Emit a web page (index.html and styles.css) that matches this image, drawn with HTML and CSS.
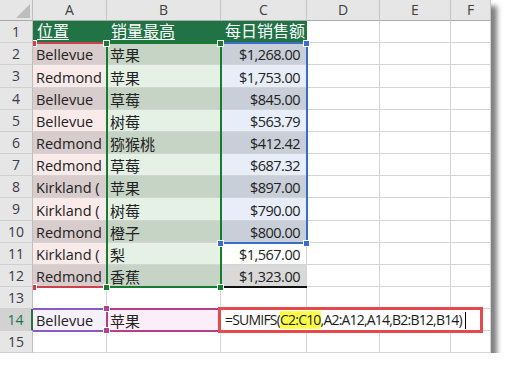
FILE: index.html
```html
<!DOCTYPE html>
<html lang="zh">
<head>
<meta charset="utf-8">
<title>SUMIFS</title>
<link rel="stylesheet" href="styles.css">
</head>
<body>
<div class="sheet">
  <div class="c corner"><svg width="32" height="20" viewBox="0 0 32 20"><polygon points="16,18 30,18 30,4" fill="#bdbdbd"/></svg></div>
  <div class="c ch">A</div><div class="c ch">B</div><div class="c ch">C</div><div class="c ch">D</div><div class="c ch">E</div><div class="c ch">F</div>

  <div class="c rh">1</div><div class="c th ul">位置</div><div class="c th ul">销量最高</div><div class="c th">每日销售额</div><div class="c"></div><div class="c"></div><div class="c"></div>

  <div class="c rh">2</div><div class="c a-d">Bellevue</div><div class="c b-d">苹果</div><div class="c num c-d">$1,268.00</div><div class="c"></div><div class="c"></div><div class="c"></div>
  <div class="c rh">3</div><div class="c a-l">Redmond</div><div class="c b-l">苹果</div><div class="c num c-l">$1,753.00</div><div class="c"></div><div class="c"></div><div class="c"></div>
  <div class="c rh">4</div><div class="c a-d">Bellevue</div><div class="c b-d">草莓</div><div class="c num c-d">$845.00</div><div class="c"></div><div class="c"></div><div class="c"></div>
  <div class="c rh">5</div><div class="c a-l">Bellevue</div><div class="c b-l">树莓</div><div class="c num c-l">$563.79</div><div class="c"></div><div class="c"></div><div class="c"></div>
  <div class="c rh">6</div><div class="c a-d">Redmond</div><div class="c b-d">猕猴桃</div><div class="c num c-d">$412.42</div><div class="c"></div><div class="c"></div><div class="c"></div>
  <div class="c rh">7</div><div class="c a-l">Redmond</div><div class="c b-l">草莓</div><div class="c num c-l">$687.32</div><div class="c"></div><div class="c"></div><div class="c"></div>
  <div class="c rh">8</div><div class="c a-d">Kirkland (</div><div class="c b-d">苹果</div><div class="c num c-d">$897.00</div><div class="c"></div><div class="c"></div><div class="c"></div>
  <div class="c rh">9</div><div class="c a-l">Kirkland (</div><div class="c b-l">树莓</div><div class="c num c-l">$790.00</div><div class="c"></div><div class="c"></div><div class="c"></div>
  <div class="c rh">10</div><div class="c a-d">Redmond</div><div class="c b-d">橙子</div><div class="c num c-d">$800.00</div><div class="c"></div><div class="c"></div><div class="c"></div>
  <div class="c rh">11</div><div class="c a-l">Kirkland (</div><div class="c b-l">梨</div><div class="c num">$1,567.00</div><div class="c"></div><div class="c"></div><div class="c"></div>
  <div class="c rh">12</div><div class="c a-d">Redmond</div><div class="c b-d">香蕉</div><div class="c num c-g">$1,323.00</div><div class="c"></div><div class="c"></div><div class="c"></div>

  <div class="c rh">13</div><div class="c"></div><div class="c"></div><div class="c"></div><div class="c"></div><div class="c"></div><div class="c"></div>
  <div class="c rh rh-act">14</div><div class="c a14">Bellevue</div><div class="c b14">苹果</div><div class="c"></div><div class="c"></div><div class="c"></div><div class="c"></div>
  <div class="c rh">15</div><div class="c"></div><div class="c"></div><div class="c"></div><div class="c"></div><div class="c"></div><div class="c"></div>

  <div class="rng rng-a"></div>
  <div class="rng rng-c"></div>
  <div class="rng rng-b"></div>
  <div class="total-line"></div>
  <div class="rng rng-a14"></div>
  <div class="rng rng-b14"></div>

  <div class="hd hd-red" style="left:33px;top:40px"></div>
  <div class="hd hd-red" style="left:33px;top:284px"></div>
  <div class="hd hd-green" style="left:103px;top:40px"></div>
  <div class="hd hd-green" style="left:217px;top:40px"></div>
  <div class="hd hd-green" style="left:103px;top:284px"></div>
  <div class="hd hd-green" style="left:217px;top:284px"></div>
  <div class="hd hd-blue" style="left:303px;top:40px"></div>
  <div class="hd hd-blue" style="left:217px;top:240px"></div>
  <div class="hd hd-blue" style="left:303px;top:240px"></div>
  <div class="hd hd-mag" style="left:103px;top:305px"></div>
  <div class="hd hd-mag" style="left:103px;top:327px"></div>

  <div class="editor">=SUMIFS(<span class="hl">C2:C10</span>,A2:A12,A14,B2:B12,B14)<span class="caret"></span></div>
</div>
</body>
</html>
```

FILE: styles.css
```css
html, body {
  margin: 0;
  padding: 0;
  background: #ffffff;
}

.sheet {
  position: relative;
  display: grid;
  grid-template-columns: 33px 74px 114px 86px 73px 71px 40px;
  grid-template-rows: 21px 22px 22px 23px 22px 22px 22px 22px 22px 23px 22px 22px 22px 22px 22px 22px;
  width: 491px;
  height: 353px;
  background: #ffffff;
  box-shadow: 6px 6px 5px rgba(0, 0, 0, 0.5);
  overflow: hidden;
  font-family: "Open Sans", "Noto Sans CJK SC", sans-serif;
  color: #222222;
}

.c {
  box-sizing: border-box;
  border-right: 1px solid #d4d4d4;
  border-bottom: 1px solid #d4d4d4;
  display: flex;
  align-items: flex-end;
  padding: 0 3px;
  font-size: 14.5px;
  line-height: 18px;
  white-space: nowrap;
  overflow: hidden;
}

.corner {
  background: #e6e6e6;
  border-right-color: #bdbdbd;
  border-bottom-color: #aaaaaa;
  padding: 0;
  align-items: flex-start;
}

.ch {
  background: #e6e6e6;
  border-right-color: #c4c4c4;
  border-bottom-color: #aaaaaa;
  justify-content: center;
  align-items: center;
  font-size: 14px;
  color: #404040;
  line-height: 20px;
}

.rh {
  background: #e6e6e6;
  border-right-color: #bdbdbd;
  border-bottom-color: #d0d0d0;
  justify-content: center;
  align-items: center;
  font-size: 14px;
  color: #3a3a4a;
  padding: 0;
}

.rh-act {
  background: #d2d2d2;
  color: #217346;
  border-right: 2px solid #217346;
}

.th {
  background: #217346;
  border-right-color: #217346;
  color: #ffffff;
  font-size: 16px;
  line-height: 20px;
  padding-left: 4px;
  padding-bottom: 1px;
}

.ul {
  text-decoration: underline;
  text-underline-offset: 2px;
}

.num {
  justify-content: flex-end;
  padding-right: 6px;
  letter-spacing: -0.5px;
}

.b-d, .b-l, .b14 {
  font-size: 15px;
}

.a-d { background: #d9cccc; }
.a-l { background: #faeaea; }
.b-d { background: #c6d4c6; }
.b-l { background: #e6f1e6; }
.c-d { background: #c9cfd9; }
.c-l { background: #e8eef9; }
.c-g { background: #d9d9d9; }

.a14 { background: #f5f1fa; }
.b14 { background: #fbeef6; }

.rng {
  position: absolute;
  box-sizing: border-box;
}

.rng-a {
  left: 33px;
  top: 42px;
  width: 74px;
  height: 246px;
  border-top: 2px solid #c9434d;
  border-bottom: 2px solid #c9434d;
}

.rng-b {
  left: 106px;
  top: 42px;
  width: 116px;
  height: 246px;
  border: 2px solid #187c30;
}

.rng-c {
  left: 220px;
  top: 42px;
  width: 88px;
  height: 202px;
  border: 2px solid #3a6dc6;
}

.total-line {
  position: absolute;
  left: 222px;
  top: 286px;
  width: 85px;
  height: 2px;
  background: #111111;
}

.rng-a14 {
  left: 33px;
  top: 308px;
  width: 74px;
  height: 24px;
  border-top: 2px solid #8a5cc2;
  border-bottom: 2px solid #8a5cc2;
}

.rng-b14 {
  left: 106px;
  top: 308px;
  width: 116px;
  height: 24px;
  border: 2px solid #b2408a;
  border-right: none;
}

.hd {
  position: absolute;
  box-sizing: border-box;
  width: 7px;
  height: 7px;
  border: 1px solid #ffffff;
}

.hd-red { background: #c9434d; width: 4px; border-left: none; }
.hd-green { background: #187c30; }
.hd-blue { background: #3a6dc6; }
.hd-mag { background: #b2408a; }

.editor {
  position: absolute;
  left: 218px;
  top: 307px;
  width: 265px;
  height: 26px;
  box-sizing: border-box;
  border: 3px solid #e44a4d;
  background: #ffffff;
  padding: 0 0 0 4px;
  display: flex;
  align-items: center;
  font-size: 14px;
  letter-spacing: -0.8px;
  line-height: 18px;
  white-space: nowrap;
  color: #1a1a1a;
}

.hl {
  background: #ffff47;
}

.caret {
  display: inline-block;
  width: 1px;
  height: 17px;
  margin-left: 3px;
  background: #000000;
}
```
